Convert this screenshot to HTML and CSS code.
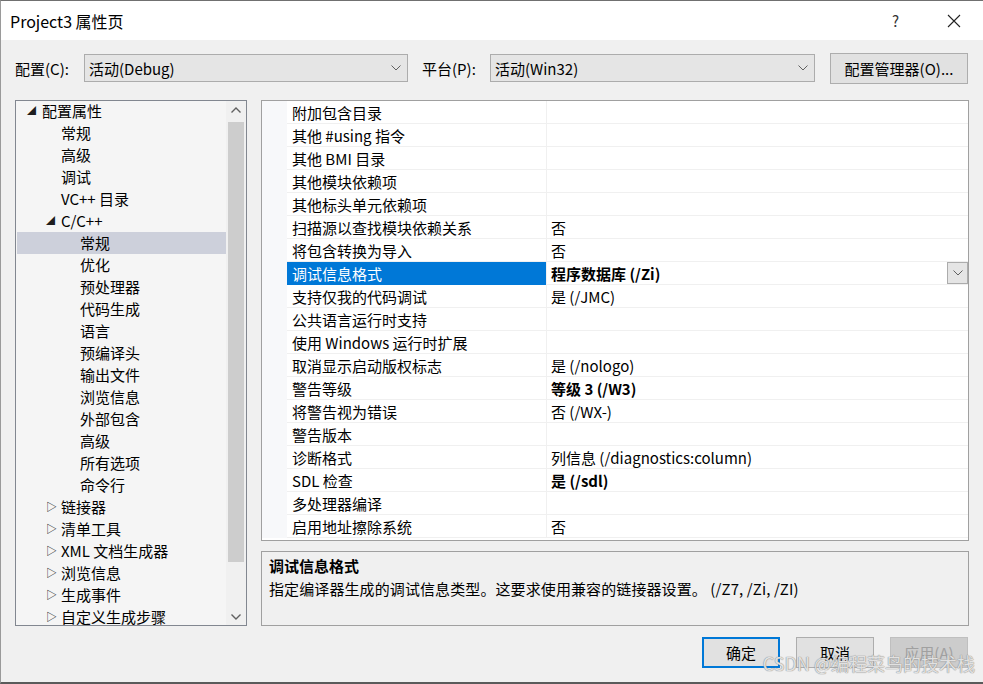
FILE: index.html
```html
<!DOCTYPE html>
<html lang="zh-CN">
<head>
    <meta charset="UTF-8">
    <title>Project3 属性页</title>
    <link rel="stylesheet" href="styles.css">
</head>
<body>
    <div class="window">
        <div class="titlebar">
            <span class="title">Project3 属性页</span>
            <span class="tb-help">?</span>
            <span class="tb-close">
                <svg width="14" height="14" viewBox="0 0 14 14"><path d="M1 1 L13 13 M13 1 L1 13" stroke="#222" stroke-width="1.1" fill="none"/></svg>
            </span>
        </div>

        <div class="content">
            <div class="config-row">
                <span class="cfg-label">配置(C):</span>
                <div class="combo combo-config">
                    <span>活动(Debug)</span>
                    <svg class="chev" width="10" height="6" viewBox="0 0 10 6"><path d="M0.5 0.5 L5 5 L9.5 0.5" stroke="#606060" fill="none"/></svg>
                </div>
                <span class="cfg-label platform-label">平台(P):</span>
                <div class="combo combo-platform">
                    <span>活动(Win32)</span>
                    <svg class="chev" width="10" height="6" viewBox="0 0 10 6"><path d="M0.5 0.5 L5 5 L9.5 0.5" stroke="#606060" fill="none"/></svg>
                </div>
                <button class="btn btn-manager">配置管理器(O)...</button>
            </div>

            <div class="panes">
                <div class="tree">
                    <div class="tree-list">
                        <div class="node lvl0"><span class="tw tw-open">◢</span>配置属性</div>
                        <div class="node lvl1">常规</div>
                        <div class="node lvl1">高级</div>
                        <div class="node lvl1">调试</div>
                        <div class="node lvl1">VC++ 目录</div>
                        <div class="node lvl1"><span class="tw tw-open">◢</span>C/C++</div>
                        <div class="node lvl2 selected">常规</div>
                        <div class="node lvl2">优化</div>
                        <div class="node lvl2">预处理器</div>
                        <div class="node lvl2">代码生成</div>
                        <div class="node lvl2">语言</div>
                        <div class="node lvl2">预编译头</div>
                        <div class="node lvl2">输出文件</div>
                        <div class="node lvl2">浏览信息</div>
                        <div class="node lvl2">外部包含</div>
                        <div class="node lvl2">高级</div>
                        <div class="node lvl2">所有选项</div>
                        <div class="node lvl2">命令行</div>
                        <div class="node lvl1"><span class="tw tw-closed">▷</span>链接器</div>
                        <div class="node lvl1"><span class="tw tw-closed">▷</span>清单工具</div>
                        <div class="node lvl1"><span class="tw tw-closed">▷</span>XML 文档生成器</div>
                        <div class="node lvl1"><span class="tw tw-closed">▷</span>浏览信息</div>
                        <div class="node lvl1"><span class="tw tw-closed">▷</span>生成事件</div>
                        <div class="node lvl1"><span class="tw tw-closed">▷</span>自定义生成步骤</div>
                    </div>
                    <div class="scrollbar">
                        <div class="sb-arrow">
                            <svg width="10" height="6" viewBox="0 0 10 6"><path d="M0.5 5.5 L5 1 L9.5 5.5" stroke="#606060" stroke-width="1.4" fill="none"/></svg>
                        </div>
                        <div class="sb-track"><div class="sb-thumb"></div></div>
                        <div class="sb-arrow">
                            <svg width="10" height="6" viewBox="0 0 10 6"><path d="M0.5 0.5 L5 5 L9.5 0.5" stroke="#606060" stroke-width="1.4" fill="none"/></svg>
                        </div>
                    </div>
                </div>

                <div class="right">
                    <div class="grid">
                        <div class="row"><span class="gut"></span><span class="name">附加包含目录</span><span class="val"></span></div>
                        <div class="row"><span class="gut"></span><span class="name">其他 #using 指令</span><span class="val"></span></div>
                        <div class="row"><span class="gut"></span><span class="name">其他 BMI 目录</span><span class="val"></span></div>
                        <div class="row"><span class="gut"></span><span class="name">其他模块依赖项</span><span class="val"></span></div>
                        <div class="row"><span class="gut"></span><span class="name">其他标头单元依赖项</span><span class="val"></span></div>
                        <div class="row"><span class="gut"></span><span class="name">扫描源以查找模块依赖关系</span><span class="val">否</span></div>
                        <div class="row"><span class="gut"></span><span class="name">将包含转换为导入</span><span class="val">否</span></div>
                        <div class="row active"><span class="gut"></span><span class="name">调试信息格式</span><span class="val bold">程序数据库 (/Zi)
                            <span class="dd"><svg width="10" height="6" viewBox="0 0 10 6"><path d="M0.5 0.5 L5 5 L9.5 0.5" stroke="#606060" fill="none"/></svg></span>
                        </span></div>
                        <div class="row"><span class="gut"></span><span class="name">支持仅我的代码调试</span><span class="val">是 (/JMC)</span></div>
                        <div class="row"><span class="gut"></span><span class="name">公共语言运行时支持</span><span class="val"></span></div>
                        <div class="row"><span class="gut"></span><span class="name">使用 Windows 运行时扩展</span><span class="val"></span></div>
                        <div class="row"><span class="gut"></span><span class="name">取消显示启动版权标志</span><span class="val">是 (/nologo)</span></div>
                        <div class="row"><span class="gut"></span><span class="name">警告等级</span><span class="val bold">等级 3 (/W3)</span></div>
                        <div class="row"><span class="gut"></span><span class="name">将警告视为错误</span><span class="val">否 (/WX-)</span></div>
                        <div class="row"><span class="gut"></span><span class="name">警告版本</span><span class="val"></span></div>
                        <div class="row"><span class="gut"></span><span class="name">诊断格式</span><span class="val">列信息 (/diagnostics:column)</span></div>
                        <div class="row"><span class="gut"></span><span class="name">SDL 检查</span><span class="val bold">是 (/sdl)</span></div>
                        <div class="row"><span class="gut"></span><span class="name">多处理器编译</span><span class="val"></span></div>
                        <div class="row"><span class="gut"></span><span class="name">启用地址擦除系统</span><span class="val">否</span></div>
                    </div>
                    <div class="desc">
                        <div class="desc-title">调试信息格式</div>
                        <div class="desc-text">指定编译器生成的调试信息类型。这要求使用兼容的链接器设置。 (/Z7, /Zi, /ZI)</div>
                    </div>
                </div>
            </div>

            <div class="buttons">
                <button class="btn btn-ok">确定</button>
                <button class="btn">取消</button>
                <button class="btn disabled">应用(A)</button>
            </div>
        </div>

        <div class="watermark">CSDN @编程菜鸟的技术栈</div>
    </div>
</body>
</html>
```

FILE: styles.css
```css
body {
    margin: 0;
    font-family: "Noto Sans CJK SC", "Noto Sans", sans-serif;
    font-size: 15px;
    color: #000;
    background: #f0f0f0;
}
.window {
    position: relative;
    width: 983px;
    height: 684px;
    box-sizing: border-box;
    border-top: 1px solid #707070;
    border-left: 1px solid #9a9a9a;
    border-bottom: 2px solid #5a5a5a;
    background: #f0f0f0;
    overflow: hidden;
}
.titlebar {
    height: 39px;
    background: #fff;
    display: flex;
    align-items: center;
    padding-left: 9px;
}
.title {
    font-size: 16px;
    flex: 1;
}
.tb-help {
    font-size: 15px;
    color: #333;
    width: 55px;
}
.tb-close {
    width: 36px;
    display: flex;
    align-items: center;
}

.content {
    padding: 0 14px 0 14px;
}
.config-row {
    display: flex;
    align-items: center;
    height: 30px;
    margin-top: 13px;
}
.cfg-label {
    width: 69px;
}
.platform-label {
    margin-left: 14px;
    width: 68px;
}
.combo {
    height: 28px;
    box-sizing: border-box;
    background: #e5e5e5;
    border: 1px solid #acacac;
    display: flex;
    align-items: center;
    justify-content: space-between;
    padding: 0 6px 0 4px;
}
.combo-config {
    width: 324px;
}
.combo-platform {
    width: 325px;
}
.btn {
    font-family: inherit;
    font-size: 15px;
    color: #000;
    background: #e1e1e1;
    border: 1px solid #adadad;
    height: 31px;
    padding: 0;
    box-sizing: border-box;
}
.btn-manager {
    margin-left: 15px;
    width: 138px;
}

.panes {
    display: flex;
    margin-top: 17px;
    height: 526px;
}
.tree {
    width: 232px;
    box-sizing: border-box;
    border: 1px solid #828790;
    background: #f5f5f5;
    display: flex;
}
.tree-list {
    flex: 1;
    overflow: hidden;
}
.node {
    height: 22px;
    line-height: 21px;
    white-space: nowrap;
    margin-left: 1px;
}
.node:first-child {
    margin-top: -1px;
}
.node.selected {
    background: #cdd0db;
}
.lvl0 { padding-left: 25px; }
.lvl1 { padding-left: 44px; }
.lvl2 { padding-left: 63px; }
.tw {
    display: inline-block;
    width: 15px;
    margin-left: -15px;
    font-size: 9px;
    vertical-align: top;
    color: #1e1e1e;
}
.tw-closed {
    font-size: 11px;
}
.scrollbar {
    width: 20px;
    background: #f0f0f0;
    display: flex;
    flex-direction: column;
}
.sb-arrow {
    height: 17px;
    display: flex;
    align-items: center;
    justify-content: center;
}
.sb-track {
    flex: 1;
}
.sb-thumb {
    margin: 4px 2px 0 2px;
    height: 440px;
    background: #cdcdcd;
}

.right {
    flex: 1;
    margin-left: 14px;
    display: flex;
    flex-direction: column;
}
.grid {
    height: 441px;
    box-sizing: border-box;
    border: 1px solid #a0a0a0;
    background: #fff;
}
.row {
    display: grid;
    grid-template-columns: 25px 259px 1fr;
    height: 23px;
    line-height: 23px;
    box-sizing: border-box;
    border-bottom: 1px solid #f0f0f0;
}
.gut {
    background: #f7f8fa;
}
.name {
    padding-left: 5px;
    white-space: nowrap;
}
.val {
    border-left: 1px solid #f0f0f0;
    padding-left: 4px;
    white-space: nowrap;
    position: relative;
}
.bold {
    font-weight: bold;
}
.row.active .name {
    background: #0078d7;
    color: #fff;
}
.dd {
    position: absolute;
    right: 0;
    top: 0;
    width: 21px;
    height: 22px;
    box-sizing: border-box;
    background: #e5e5e5;
    border: 1px solid #acacac;
    display: flex;
    align-items: center;
    justify-content: center;
}
.desc {
    margin-top: 10px;
    flex: 1;
    box-sizing: border-box;
    border: 1px solid #a0a0a0;
    padding: 2px 7px;
    line-height: 23px;
}
.desc-title {
    font-weight: bold;
}
.desc-text {
    letter-spacing: 0.1px;
}

.buttons {
    display: flex;
    justify-content: flex-end;
    gap: 16px;
    margin-top: 11px;
    padding-right: 1px;
}
.buttons .btn {
    width: 78px;
}
.btn-ok {
    border: 2px solid #0078d7;
}
.btn.disabled {
    color: #a0a0a0;
    border-color: #bfbfbf;
    background: #ccc;
}
.watermark {
    position: absolute;
    right: 8px;
    bottom: 6px;
    font-size: 18px;
    color: rgba(255, 255, 255, 0.75);
    text-shadow: 0 0 1px #888, 0 0 1px #888;
    pointer-events: none;
}
```
